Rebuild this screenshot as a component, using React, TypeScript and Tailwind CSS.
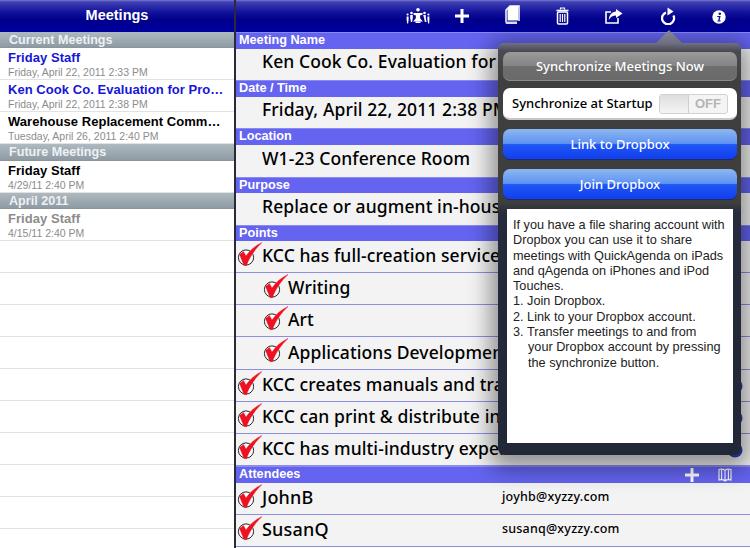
import React from "react";

const Check = () => (
  <svg width="26" height="30" viewBox="0 0 26 30" className="shrink-0">
    <circle cx="9" cy="15.5" r="7.6" fill="#fff" stroke="#222" strokeWidth="1" />
    <path d="M2.5 12.5 L6.5 9.5 L9 14 C13 8 18 4 25 0.5 C19 6 13 14 9.5 23.5 L7 23.5 Z" fill="#ee1122" stroke="#ee1122" strokeWidth="0.4" strokeLinejoin="round" />
  </svg>
);

const Disclosure = () => (
  <svg width="16" height="16" viewBox="0 0 16 16" className="shrink-0">
    <circle cx="8" cy="8" r="7.5" fill="#2a3fc0" />
    <path d="M6 3.5 L10.5 8 L6 12.5" fill="none" stroke="#fff" strokeWidth="2" />
  </svg>
);

const People = () => (
  <svg width="24" height="16" viewBox="0 0 24 16" fill="#fff">
    <circle cx="12" cy="1.8" r="1.8" />
    <path d="M7.5 5 L16.5 5 L16.5 6.8 L14 7.6 L14.3 10.5 L17 13.5 L7 13.5 L9.7 10.5 L10 7.6 L7.5 6.8 Z" />
    <rect x="9.5" y="13.5" width="5" height="1.5" />
    <circle cx="5.5" cy="5" r="1.3" /><path d="M4.2 7h2.6v3l-.7 4H4.9l-.7-4z" />
    <circle cx="18.5" cy="5" r="1.3" /><path d="M17.2 7h2.6v3l.7 4h-1.6l-.9-4z" />
    <circle cx="1.6" cy="6.5" r="1.1" /><path d="M.6 8.5h2v3l-.5 4H1.2L.6 11.5z" />
    <circle cx="22.4" cy="6.5" r="1.1" /><path d="M21.4 8.5h2v3l-.2 4h-1l-.8-4z" />
  </svg>
);
const Plus = ({ s = 14 }: { s?: number }) => (
  <svg width={s} height={s} viewBox="0 0 14 14" fill="#fff"><path d="M5.5 0h3v5.5H14v3H8.5V14h-3V8.5H0v-3h5.5z" /></svg>
);
const Docs = () => (
  <svg width="15" height="20" viewBox="0 0 15 20" fill="none">
    <path d="M1 17.5 V5 L5 1 H14 V16" stroke="#fff" strokeWidth="1.5" />
    <path d="M2.5 3.5 L5.5 1 H13 V15.5 H2.5 Z" fill="#fff" />
    <path d="M0.8 16.5 H12 V19 H0.8 Z" fill="#dfe0f5" />
  </svg>
);
const Trash = () => (
  <svg width="13" height="18" viewBox="0 0 13 18" fill="none" stroke="#fff">
    <path d="M0.5 3.5 H12.5" strokeWidth="1.6" />
    <path d="M4.5 2.5 V1 H8.5 V2.5" strokeWidth="1.2" />
    <rect x="1.5" y="5" width="10" height="12" rx="1" strokeWidth="1.5" />
    <path d="M4.2 7 V15 M6.5 7 V15 M8.8 7 V15" strokeWidth="1.2" />
  </svg>
);
const Share = () => (
  <svg width="18" height="15" viewBox="0 0 18 15" fill="none">
    <path d="M6 3 H1 V14 H13 V9" stroke="#fff" strokeWidth="1.6" />
    <path d="M11 0 L17.5 4.5 L11 9 V6.4 C8 6.4 5.5 7.5 3.8 11 C4 6 7 3 11 2.6 Z" fill="#fff" />
  </svg>
);
const Refresh = () => (
  <svg width="15" height="18" viewBox="0 0 15 18" fill="none">
    <path d="M5 5.6 A6 6 0 1 0 12.4 8.5" stroke="#fff" strokeWidth="2.3" />
    <path d="M6.5 0.5 L12.5 4.5 L6.5 8.5 Z" fill="#fff" />
  </svg>
);
const Info = () => (
  <svg width="14" height="14" viewBox="0 0 14 14">
    <circle cx="7" cy="7" r="6.7" fill="#fff" />
    <circle cx="7.8" cy="3.7" r="1.3" fill="#14148c" />
    <path d="M5.3 6 H8.6 L7.6 10.6 H8.8 L8.5 11.6 H5.3 L5.6 10.6 H6.2 L6.9 7 H5.1 Z" fill="#14148c" />
  </svg>
);
const Book = () => (
  <svg width="14" height="14" viewBox="0 0 14 14" fill="none" stroke="#fff" strokeWidth="1.1">
    <path d="M7 2.5 C5.5 1 3 1 1 1.5 V12 C3 11.5 5.5 11.5 7 13 C8.5 11.5 11 11.5 13 12 V1.5 C11 1 8.5 1 7 2.5 Z M7 2.5 V13 M3.6 2 V11.4 M10.4 2 V11.4" />
  </svg>
);

const headerBg = "bg-[linear-gradient(#7a7ad0_0%,#4040b4_6%,#10109a_40%,#00008a_62%,#0000a0_100%)]";
const serif = "font-['Liberation_Sans',Arial,sans-serif]";
const tr = "font-['Noto_Sans',sans-serif]";

const LeftHead = ({ t, h = "h-4" }: { t: string; h?: string }) => (
  <div className={`${h} flex items-center pl-[9px] shrink-0 bg-[linear-gradient(#aeb9c0,#8f9ba4)] border-b border-[#8a949c] text-[#eef1f3] text-[12.6px] leading-4 font-bold`}>{t}</div>
);
const LeftRow = ({ t, s, c }: { t: string; s: string; c: string }) => (
  <div className="h-8 shrink-0 bg-white border-b border-[#e2e2e2] pl-2 pr-2 flex flex-col">
    <div className={`text-[13px] leading-[17px] pt-[1px] h-[18px] font-bold whitespace-nowrap overflow-hidden tracking-[0.05px] ${c}`}>{t}</div>
    <div className="text-[10.5px] leading-[12px] text-[#8c8c8c]">{s}</div>
  </div>
);

const SecHead = ({ t, h = "h-[17px]", children }: { t: string; h?: string; children?: React.ReactNode }) => (
  <div className={`${h} shrink-0 bg-[#6464f0] border-t border-[#8a8af4] flex items-center justify-between pl-[3px] text-white text-[12.7px] font-bold`}>
    <span>{t}</span>
    {children}
  </div>
);
const Field = ({ t, h = "h-[31px]" }: { t: string; h?: string }) => (
  <div className={`${h} shrink-0 bg-[#f3f3f3] pl-[26px] pb-[6px] flex items-center whitespace-nowrap overflow-hidden text-[17.5px] font-medium text-black ${tr} tracking-[0.1px]`}>{t}</div>
);
const Point = ({ t, indent = false, arrow = false, h = "h-[32px]" }: { t: string; indent?: boolean; arrow?: boolean; h?: string }) => (
  <div className={`${h} shrink-0 bg-[#f3f3f3] border-b border-[#8d8de2] flex items-center whitespace-nowrap overflow-hidden ${indent ? "pl-[27px]" : "pl-[1px]"} pr-[7px] text-[17.5px] font-medium text-black ${tr} tracking-[0.1px]`}>
    <Check />
    <span className="flex-1 -ml-[1px] pb-[2px]">{t}</span>
    {arrow && <Disclosure />}
  </div>
);
const Attendee = ({ n, e }: { n: string; e: string }) => (
  <div className={`h-[32px] shrink-0 bg-[#f3f3f3] border-b border-[#8d8de2] flex items-center pl-[1px] whitespace-nowrap ${tr} text-black`}>
    <Check />
    <span className="w-[240px] -ml-[1px] pb-[2px] text-[18px] font-medium tracking-[0.2px]">{n}</span>
    <span className="pb-[2px] text-[12.5px] font-medium tracking-[0.2px]">{e}</span>
  </div>
);

const Btn = ({ t, bg, cls = "" }: { t: string; bg: string; cls?: string }) => (
  <div className={`rounded-[7px] flex items-center justify-center whitespace-nowrap text-white text-[13px] font-medium pt-[1px] ${tr} ${bg} ${cls}`}>{t}</div>
);

export default function App() {
  return (
    <div className={`relative w-[750px] h-[548px] overflow-hidden bg-white flex ${serif}`}>
      {/* Left */}
      <div className="w-[234px] h-full flex flex-col shrink-0">
        <div className={`h-8 shrink-0 ${headerBg} flex items-center justify-center text-white text-[14.5px] font-bold`}>Meetings</div>
        <LeftHead t="Current Meetings" />
        <LeftRow t="Friday Staff" s="Friday, April 22, 2011 2:33 PM" c="text-[#1616d8]" />
        <LeftRow t="Ken Cook Co. Evaluation for Pro…" s="Friday, April 22, 2011 2:38 PM" c="text-[#1616d8]" />
        <LeftRow t="Warehouse Replacement Comm…" s="Tuesday, April 26, 2011 2:40 PM" c="text-black" />
        <LeftHead t="Future Meetings" h="h-[17px]" />
        <LeftRow t="Friday Staff" s="4/29/11 2:40 PM" c="text-black" />
        <LeftHead t="April  2011" />
        <LeftRow t="Friday Staff" s="4/15/11 2:40 PM" c="text-[#8c8c8c]" />
        {[0, 1, 2, 3, 4, 5, 6, 7, 8, 9].map((i) => (
          <div key={i} className="h-8 shrink-0 border-b border-[#e2e2e2] bg-white" />
        ))}
      </div>
      <div className="w-[2px] h-full bg-[#2a2a3a] shrink-0" />
      {/* Right */}
      <div className="flex-1 h-full flex flex-col overflow-hidden">
        <div className={`h-8 shrink-0 ${headerBg} relative`}>
          <div className="absolute left-[170px] top-[8px]"><People /></div>
          <div className="absolute left-[219px] top-[9px]"><Plus /></div>
          <div className="absolute left-[269px] top-[5px]"><Docs /></div>
          <div className="absolute left-[320px] top-[7px]"><Trash /></div>
          <div className="absolute left-[369px] top-[9px]"><Share /></div>
          <div className="absolute left-[425px] top-[7px]"><Refresh /></div>
          <div className="absolute left-[476px] top-[10px]"><Info /></div>
        </div>
        <SecHead t="Meeting Name" />
        <Field t="Ken Cook Co. Evaluation for Proposal" />
        <SecHead t="Date / Time" />
        <Field t="Friday, April 22, 2011 2:38 PM" />
        <SecHead t="Location" />
        <Field t="W1-23 Conference Room" h="h-[32px]" />
        <SecHead t="Purpose" h="h-[16px]" />
        <Field t="Replace or augment in-house documentation" h="h-[32px]" />
        <SecHead t="Points" h="h-[16px]" />
        <Point t="KCC has full-creation services" />
        <Point t="Writing" indent />
        <Point t="Art" indent />
        <Point t="Applications Development" indent h="h-[33px]" />
        <Point t="KCC creates manuals and training" arrow />
        <Point t="KCC can print & distribute internationally" arrow />
        <Point t="KCC has multi-industry experience" arrow />
        <SecHead t="Attendees">
          <span className="flex items-center gap-[19px] pr-[18px]"><Plus /><Book /></span>
        </SecHead>
        <Attendee n="JohnB" e="joyhb@xyzzy.com" />
        <Attendee n="SusanQ" e="susanq@xyzzy.com" />
      </div>

      {/* Popover */}
      <div className="absolute left-[656px] top-[30px] w-0 h-0 border-l-[13px] border-r-[13px] border-b-[13px] border-l-transparent border-r-transparent border-b-[#8f90a4]" />
      <div className="absolute left-[498px] top-[43px] w-[243px] h-[412px] rounded-[6px] p-[5px] pt-[9px] pr-[4px] flex flex-col bg-[linear-gradient(#6f7083_0px,#4a4a52_8px,#3f3f3f_40px,#3e3e3e_160px,#252a3c_170px,#232838_100%)] shadow-[0_6px_22px_8px_rgba(0,0,0,0.4)]">
        <Btn t="Synchronize Meetings Now" bg="bg-[linear-gradient(#9a9a9a,#858585_48%,#6e6e6e_52%,#6a6a6a)] border-b border-[#8a8a8a]" cls="h-[29px]" />
        <div className="h-[32px] mt-[7px] pt-[2px] rounded-[7px] bg-white border-b-2 border-[#c8c8c8] flex items-center justify-between pl-[9px] pr-[9px]">
          <span className={`text-[13px] font-medium whitespace-nowrap text-black ${tr}`}>Synchronize at Startup</span>
          <div className="w-[69px] h-[20px] rounded-[3px] border border-[#d2d2d2] flex bg-[#f4f4f4] overflow-hidden">
            <div className="w-[29px] h-full bg-[linear-gradient(#dedede,#f4f4f4)] border-r border-[#cfcfcf]" />
            <div className="flex-1 text-center text-[13px] leading-[18px] font-bold text-[#b4b4b4]">OFF</div>
          </div>
        </div>
        <Btn t="Link to Dropbox" bg="bg-[linear-gradient(#8db7f2,#5f93f2_48%,#1f55f4_52%,#1140f0)] border-b border-[#1a2a70]" cls="h-[31px] mt-[9px]" />
        <Btn t="Join Dropbox" bg="bg-[linear-gradient(#8db7f2,#5f93f2_48%,#1f55f4_52%,#1140f0)] border-b border-[#1a2a70]" cls="h-[31px] mt-[9px]" />
        <div className="mt-[9px] mx-[4px] h-[234px] bg-white pl-[6px] pr-1 pt-[9px] text-[12.7px] leading-[15.3px] text-[#222]">
          <p>If you have a file sharing account with Dropbox you can use it to share meetings with QuickAgenda on iPads and qAgenda on iPhones and iPod Touches.</p>
          <p>1. Join Dropbox.</p>
          <p>2. Link to your Dropbox account.</p>
          <p className="pl-[15px] -indent-[15px] whitespace-nowrap">3. Transfer meetings to and from<br />your Dropbox account by pressing<br />the synchronize button.</p>
        </div>
      </div>
    </div>
  );
}
